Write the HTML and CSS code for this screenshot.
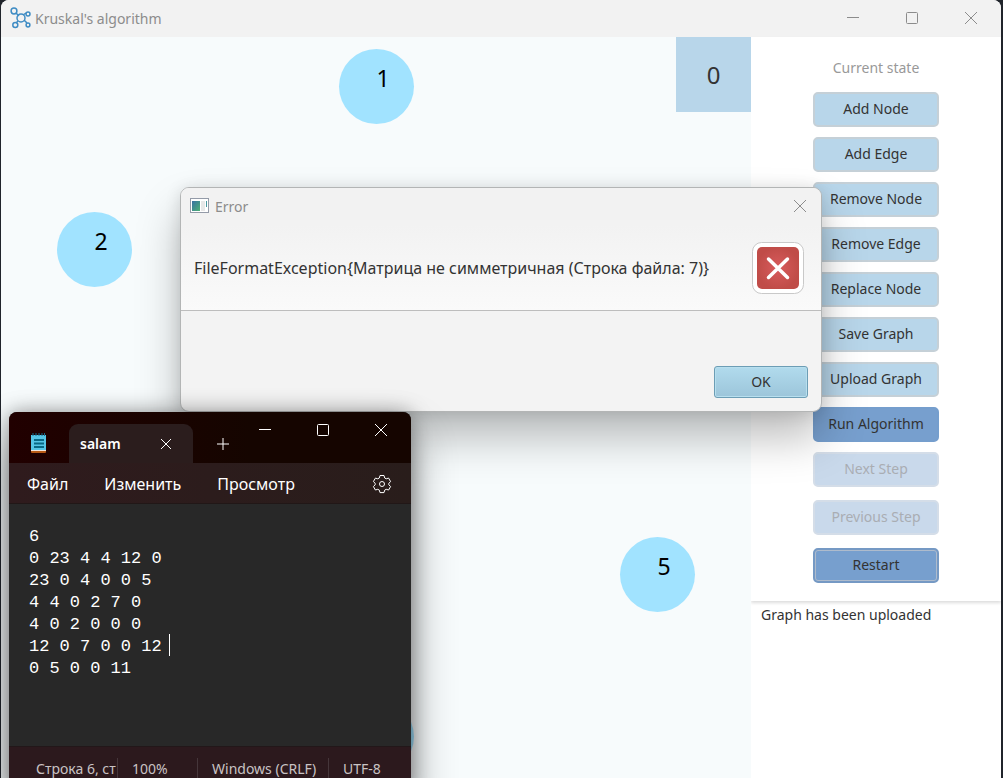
FILE: index.html
```html
<!DOCTYPE html>
<html lang="en">
<head>
<meta charset="utf-8">
<title>Kruskal's algorithm</title>
<link rel="stylesheet" href="styles.css">
</head>
<body>
<main class="app">
  <header class="titlebar">
    <svg class="app-icon" width="22" height="22" viewBox="0 0 22 22" fill="none" stroke="#3f8cc4" stroke-width="1.5">
      <path d="M6 6l3 3M13 8l3-2M8 14l-2 2M14 13l3 3"/>
      <circle cx="4" cy="4" r="2.9"/><circle cx="11" cy="11" r="4"/><circle cx="18" cy="7" r="2"/><circle cx="5.300" cy="18" r="2.500"/><circle cx="18" cy="18" r="1.900"/>
    </svg>
    <h1 class="titlebar-text">Kruskal's algorithm</h1>
    <div class="window-buttons">
      <button class="window-button" aria-label="Minimize"><svg width="14" height="14" viewBox="0 0 14 14"><path d="M1 6.500h12"/></svg></button>
      <button class="window-button" aria-label="Maximize"><svg width="14" height="14" viewBox="0 0 14 14"><rect x="1.500" y="1.500" width="11" height="11" rx="1"/></svg></button>
      <button class="window-button" aria-label="Close"><svg width="14" height="14" viewBox="0 0 14 14"><path d="M1 1l12 12M13 1L1 13"/></svg></button>
    </div>
  </header>
  <div class="content">
    <section class="canvas" aria-label="Graph">
      <div class="node node-1">1</div>
      <div class="node node-2">2</div>
      <div class="node node-4"></div>
      <div class="node node-5">5</div>
      <output class="counter">0</output>
    </section>
    <aside class="sidebar">
      <div class="controls">
        <h2 class="state-title">Current state</h2>
        <div class="actions">
          <button class="action">Add Node</button>
          <button class="action">Add Edge</button>
          <button class="action">Remove Node</button>
          <button class="action">Remove Edge</button>
          <button class="action">Replace Node</button>
          <button class="action">Save Graph</button>
          <button class="action">Upload Graph</button>
          <button class="action action-run">Run Algorithm</button>
        </div>
        <div class="actions actions-steps">
          <button class="action action-run" disabled>Next Step</button>
          <button class="action action-run" disabled>Previous Step</button>
          <button class="action action-run action-restart">Restart</button>
        </div>
      </div>
      <p class="log">Graph has been uploaded</p>
    </aside>
  </div>
</main>

<section class="dialog" role="alertdialog" aria-labelledby="dialog-title" aria-describedby="dialog-message">
  <div class="dialog-top">
    <header class="dialog-bar">
      <svg width="20" height="16" viewBox="0 0 20 16">
        <defs><linearGradient id="pane" x1="0" y1="0" x2="1" y2="1"><stop offset="0" stop-color="#3a71a3"/><stop offset="1" stop-color="#4db174"/></linearGradient></defs>
        <rect x=".5" y=".5" width="18" height="14" fill="#fff" stroke="#949ba8"/>
        <rect x="2" y="3" width="8" height="10" fill="url(#pane)"/>
        <rect x="11" y="3" width="4" height="10" fill="#e8e8e8"/>
        <rect x="16" y="3" width="1" height="6" fill="#4b98a0"/>
      </svg>
      <h2 class="dialog-title" id="dialog-title">Error</h2>
      <button class="dialog-close" aria-label="Close"><svg width="14" height="14" viewBox="0 0 14 14"><path d="M1 1l12 12M13 1L1 13"/></svg></button>
    </header>
    <div class="dialog-body">
      <p class="dialog-message" id="dialog-message">FileFormatException{Матрица не симметричная (Строка файла: 7)}</p>
      <svg width="52" height="52" viewBox="0 0 52 52">
        <defs><radialGradient id="alert"><stop offset="0" stop-color="#d85b5c"/><stop offset="1" stop-color="#c04c48"/></radialGradient></defs>
        <rect x=".5" y=".5" width="51" height="51" rx="9" fill="#fff" stroke="#c9c9c9"/>
        <rect x="5" y="5" width="42" height="42" rx="5" fill="url(#alert)"/>
        <path d="M16.500 17l19 18.500M35.500 17l-19 18.500" stroke="#fff" stroke-width="3.500" stroke-linecap="round"/>
      </svg>
    </div>
  </div>
  <footer class="dialog-footer"><button class="ok">OK</button></footer>
</section>

<section class="notepad" aria-label="Notepad">
  <header class="notepad-tabs">
    <svg class="notepad-icon" width="17" height="21" viewBox="0 0 17 21">
      <rect x="1" y="16" width="15" height="4" rx="1" fill="#b85a16"/>
      <rect x="1" y="15" width="15" height="3" fill="#f2e6dc"/>
      <path d="M1 2h15v15H1z" fill="#55c5e6"/>
      <path d="M3 0v3M6 0v3M9 0v3M12 0v3M14.500 0v3" stroke="#126d8d"/>
      <path d="M4 7h10M4 10.500h10M4 14h10" stroke="#096985" stroke-width="2"/>
    </svg>
    <div class="tab">
      <span>salam</span>
      <button class="tab-close" aria-label="Close tab"><svg width="12" height="12" viewBox="0 0 12 12"><path d="M1 1l10 10M11 1L1 11"/></svg></button>
    </div>
    <button class="new-tab" aria-label="New tab"><svg width="14" height="14" viewBox="0 0 14 14"><path d="M1 7h12M7 1v12"/></svg></button>
    <div class="notepad-buttons">
      <button aria-label="Minimize"><svg width="14" height="14" viewBox="0 0 14 14"><path d="M1 6.500h12"/></svg></button>
      <button aria-label="Maximize"><svg width="14" height="14" viewBox="0 0 14 14"><rect x="1.500" y="1.500" width="11" height="11" rx="1"/></svg></button>
      <button aria-label="Close"><svg width="14" height="14" viewBox="0 0 14 14"><path d="M1 1l12 12M13 1L1 13"/></svg></button>
    </div>
  </header>
  <nav class="notepad-menu">
    <button>Файл</button>
    <button>Изменить</button>
    <button>Просмотр</button>
    <button class="settings" aria-label="Settings"><svg width="20" height="20" viewBox="0 0 20 20"><path d="M8 1.500h4l.7 2.500 1.500.8 2.400-.7 2 3.500L16.800 9.300v1.500l1.800 1.700-2 3.500-2.400-.7-1.500.8-.7 2.500H8l-.7-2.500-1.500-.8-2.400.7-2-3.500 1.800-1.700V9.300L1.400 7.600l2-3.500 2.400.7 1.500-.8z" stroke-linejoin="round"/><circle cx="10" cy="10" r="2.500"/></svg></button>
  </nav>
  <div class="editor">
    <textarea class="editor-text" aria-label="Text editor" spellcheck="false">6
0 23 4 4 12 0
23 0 4 0 0 5
4 4 0 2 7 0
4 0 2 0 0 0
12 0 7 0 0 12 
0 5 0 0 11</textarea>
    <span class="caret"></span>
  </div>
  <footer class="statusbar">
    <span class="status position">Строка 6, ст</span>
    <span class="status zoom">100%</span>
    <span class="status endings">Windows (CRLF)</span>
    <span class="status">UTF-8</span>
  </footer>
</section>
</body>
</html>
```
FILE: styles.css
```css
* { box-sizing: border-box; }

body {
  margin: 0;
  height: 100vh;
  overflow: hidden;
  position: relative;
  background: #20242b;
  font-family: "Noto Sans", "Open Sans", sans-serif;
  font-size: 14px;
  color: #333;
}

h1, h2, p { margin: 0; font-size: inherit; font-weight: 400; }

button {
  margin: 0;
  padding: 0;
  border: 0;
  background: none;
  font: inherit;
  color: inherit;
}

button svg { display: block; fill: none; stroke: currentColor; }

/* Main window */
.app {
  display: flex;
  flex-direction: column;
  height: 100%;
  margin: 0 2px 0 1px;
  border-radius: 8px 8px 0 0;
  overflow: hidden;
  background: #fff;
}

.titlebar {
  display: flex;
  align-items: center;
  flex: none;
  height: 37px;
  padding: 0 1px 1px 9px;
  gap: 3px;
  background: #f2f2f2;
  color: #8c8c8c;
}

.window-buttons { display: flex; margin-left: auto; }

.window-button {
  display: grid;
  place-items: center;
  width: 59px;
  height: 36px;
}

.content { display: flex; flex: 1; min-height: 0; }

.canvas {
  position: relative;
  flex: 1;
  background: #f7fbfc;
}

.node {
  position: absolute;
  width: 75px;
  height: 75px;
  padding: 12px 0 0 13px;
  border-radius: 50%;
  background: #a1e3ff;
  color: #000;
  font-size: 23px;
  line-height: 34px;
  text-align: center;
}

.node-1 { left: 338px; top: 12px; }
.node-2 { left: 56px; top: 175px; }
.node-4 { left: 338px; top: 662px; }
.node-5 { left: 619px; top: 500px; }

.counter {
  position: absolute;
  top: 0;
  right: 0;
  display: grid;
  place-items: center;
  width: 75px;
  height: 75px;
  background: #b8d6ea;
  font-size: 24px;
}

.sidebar { flex: none; width: 250px; background: #fff; }

.controls {
  padding: 20px 0 18px;
  box-shadow: 0 2px 3px #ddd;
  text-align: center;
}

.state-title { margin-bottom: 13px; line-height: 22px; color: #999; }

.actions {
  display: flex;
  flex-direction: column;
  align-items: center;
  gap: 10px;
}

.actions-steps { gap: 13px; margin-top: 10px; }

.action {
  width: 126px;
  height: 35px;
  padding-bottom: 2px;
  border: 2px solid #c5d0d7;
  border-radius: 5px;
  background: #b8d6ea;
}

.action-run { border-color: #759ecd; background: #779fce; }

.action:disabled { border-color: #d4dde8; background: #c9d9eb; color: #a9adb3; }

.action-restart { border-color: #7599c4; box-shadow: inset 0 0 0 1px #aebbcc; }

.log { padding: 3px 10px; line-height: 22px; }

/* Error dialog */
.dialog {
  position: absolute;
  left: 180px;
  top: 187px;
  width: 642px;
  border: 1px solid #b3b5b5;
  border-radius: 9px;
  overflow: hidden;
  background: #f3f3f3;
  box-shadow: 0 26px 44px rgba(0, 0, 0, .26), 0 1px 16px rgba(0, 0, 0, .12);
}

.dialog-top {
  border-bottom: 1px solid #bdbdbd;
  background: linear-gradient(#f2f2f2 30%, #fafafa);
}

.dialog-bar {
  display: flex;
  align-items: center;
  height: 37px;
  padding: 0 14px 1px 9px;
  gap: 5px;
  color: #8c8c8c;
}

.dialog-close { margin-left: auto; }

.dialog-body {
  display: flex;
  align-items: center;
  justify-content: space-between;
  padding: 17px 17px 16px 13px;
}

.dialog-message { font-size: 16px; white-space: nowrap; }

.dialog-footer { display: flex; justify-content: flex-end; padding: 55px 13px 13px; }

.ok {
  width: 94px;
  height: 32px;
  padding-bottom: 1px;
  border: 1px solid #6c9db5;
  border-radius: 3px;
  background: linear-gradient(#b1dbed, #9cc5da);
  box-shadow: inset 0 0 0 1px #b8dfee;
}

/* Notepad window */
.notepad {
  position: absolute;
  left: 9px;
  top: 412px;
  width: 402px;
  border-radius: 8px;
  overflow: hidden;
  background: #282828;
  box-shadow: 0 24px 44px rgba(0, 0, 0, .42), 0 0 20px rgba(0, 0, 0, .36);
  color: #fff;
}

.notepad-tabs {
  display: flex;
  align-items: flex-end;
  height: 51px;
  padding-left: 21px;
  background: linear-gradient(90deg, #210000, #150500 60%);
}

.notepad-icon { margin-bottom: 9px; }

.tab {
  display: flex;
  align-items: center;
  justify-content: space-between;
  width: 124px;
  height: 39px;
  margin-left: 22px;
  padding: 0 21px 0 11px;
  border-radius: 9px 9px 0 0;
  background: #2b1d1d;
  font-weight: 600;
}

.new-tab { margin: 0 0 12px 23px; }

.notepad-buttons {
  display: flex;
  align-self: flex-start;
  gap: 44px;
  margin: 11px 23px 0 auto;
}

.notepad-menu {
  display: flex;
  align-items: center;
  height: 41px;
  padding: 2px 19px 0 18px;
  gap: 36px;
  border-bottom: 1px solid #211717;
  background: linear-gradient(90deg, #2f1b1d, #291d1b);
  font-size: 16px;
}

.settings { margin-left: auto; }

.editor { position: relative; }

.editor-text {
  display: block;
  width: 100%;
  height: 242px;
  padding: 22px 20px;
  border: 0;
  outline: 0;
  resize: none;
  overflow: hidden;
  background: #282828;
  color: #fff;
  font: 17px/22px "Liberation Mono", monospace;
}

.caret {
  position: absolute;
  left: 160px;
  top: 130px;
  width: 1px;
  height: 22px;
  background: #fff;
}

.statusbar {
  display: flex;
  height: 48px;
  padding: 11px 0 0 27px;
  border-top: 1px solid #221719;
  background: #2c191d;
  color: #c9c3c4;
  line-height: 22px;
}

.status { padding-right: 14px; white-space: nowrap; }
.status + .status { padding-left: 14px; border-left: 1px solid #45363a; }
.position { width: 81px; padding: 0; }
.zoom { width: 80px; }
.endings { width: 131px; padding-right: 0; }
```
